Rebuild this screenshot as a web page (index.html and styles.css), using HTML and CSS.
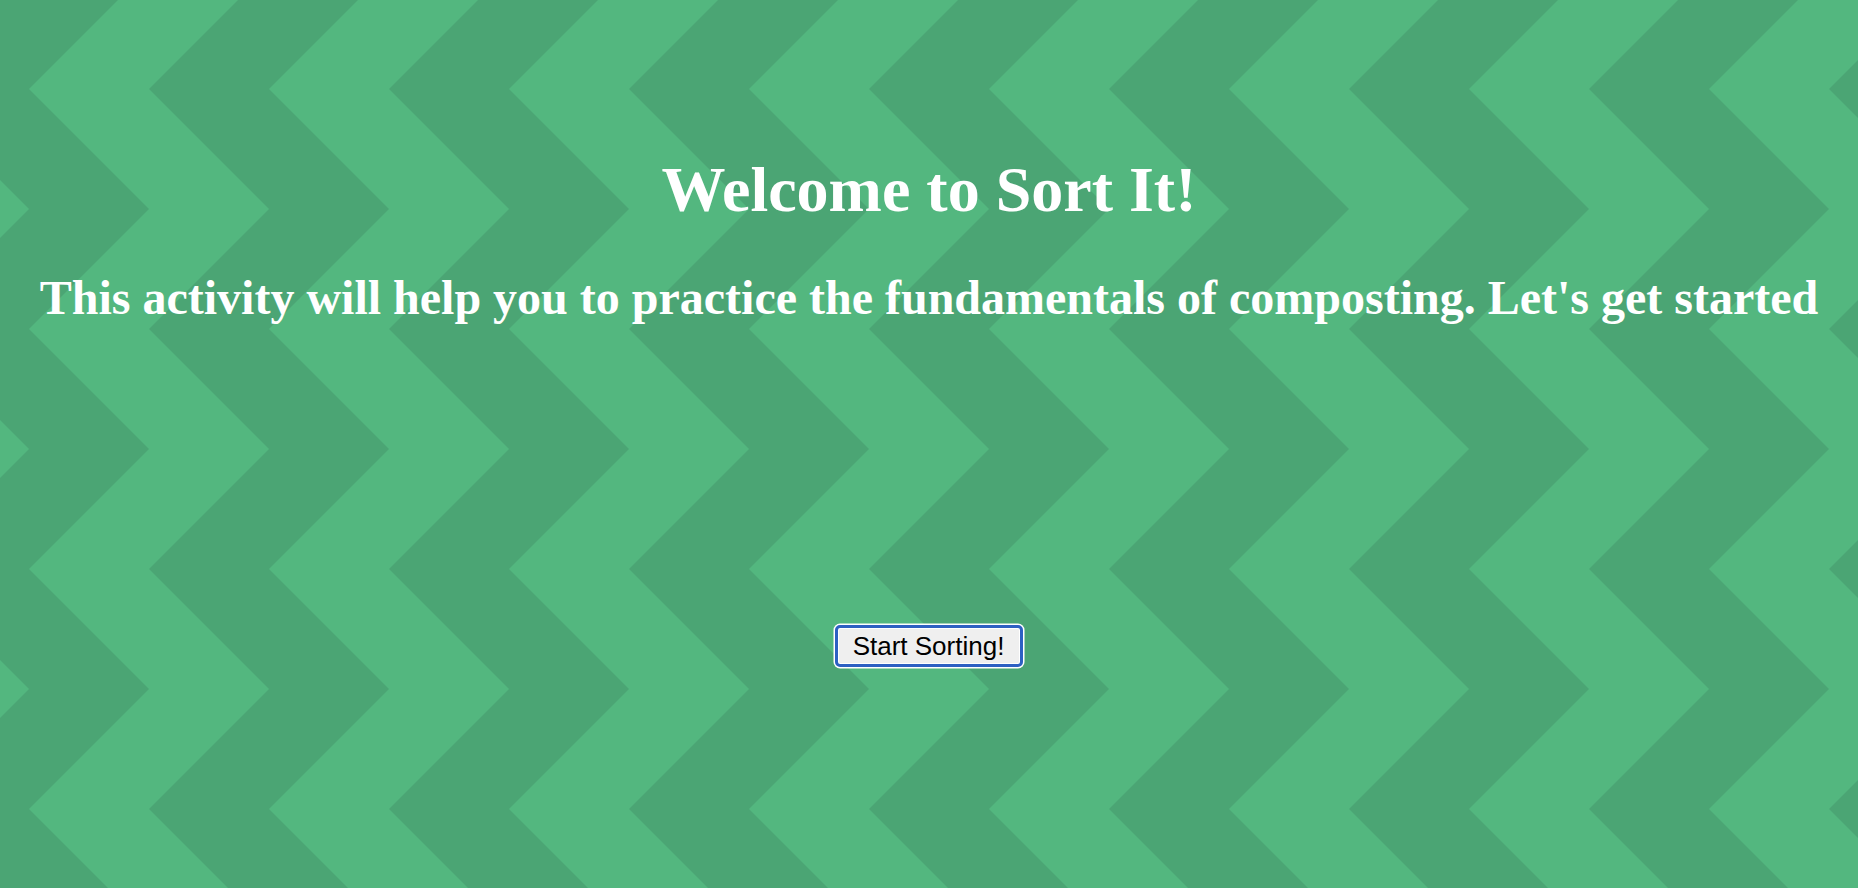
FILE: index.html
```html
<!DOCTYPE html>
<html lang="en">
<head>
<meta charset="utf-8">
<title>Sort It!</title>
<link rel="stylesheet" href="styles.css">
</head>
<body>
<main class="intro">
  <h1 class="intro-title">Welcome to Sort It!</h1>
  <h2 class="intro-text">This activity will help you to practice the fundamentals of composting. Let's get started</h2>
  <div class="intro-actions">
    <button class="start-btn" type="button">Start Sorting!</button>
  </div>
</main>
</body>
</html>
```

FILE: styles.css
```css
html, body {
  height: 100%;
}

body {
  margin: 0;
  font-family: "Liberation Serif", "Times New Roman", serif;
  background-color: #4ba574;
  background-image: url("data:image/svg+xml,%3Csvg xmlns='http://www.w3.org/2000/svg' width='240' height='240'%3E%3Cpolygon points='0,0 120,0 240,120 120,240 0,240 120,120' fill='%2353b77f'/%3E%3C/svg%3E");
  background-size: 240px 240px;
  background-position: 29px 89px;
  background-repeat: repeat;
  overflow: hidden;
}

.intro {
  padding-top: 153px;
  text-align: center;
  color: #ffffff;
}

.intro-title {
  margin: 0 0 43px;
  font-size: 64px;
  font-weight: bold;
}

.intro-text {
  margin: 0;
  font-size: 48px;
  font-weight: bold;
}

.intro-actions {
  display: flex;
  justify-content: center;
  padding-top: 300px;
}

.start-btn {
  font-family: "Liberation Sans", Arial, sans-serif;
  font-size: 26px;
  line-height: 30px;
  color: #000;
  background: #efefef;
  border: 3px solid #2d60c2;
  border-radius: 5px;
  padding: 3px 16px 3px 15px;
  box-shadow: 0 0 0 1.5px #ffffff, inset 0 0 0 1px #ffffff;
  cursor: pointer;
}
```
